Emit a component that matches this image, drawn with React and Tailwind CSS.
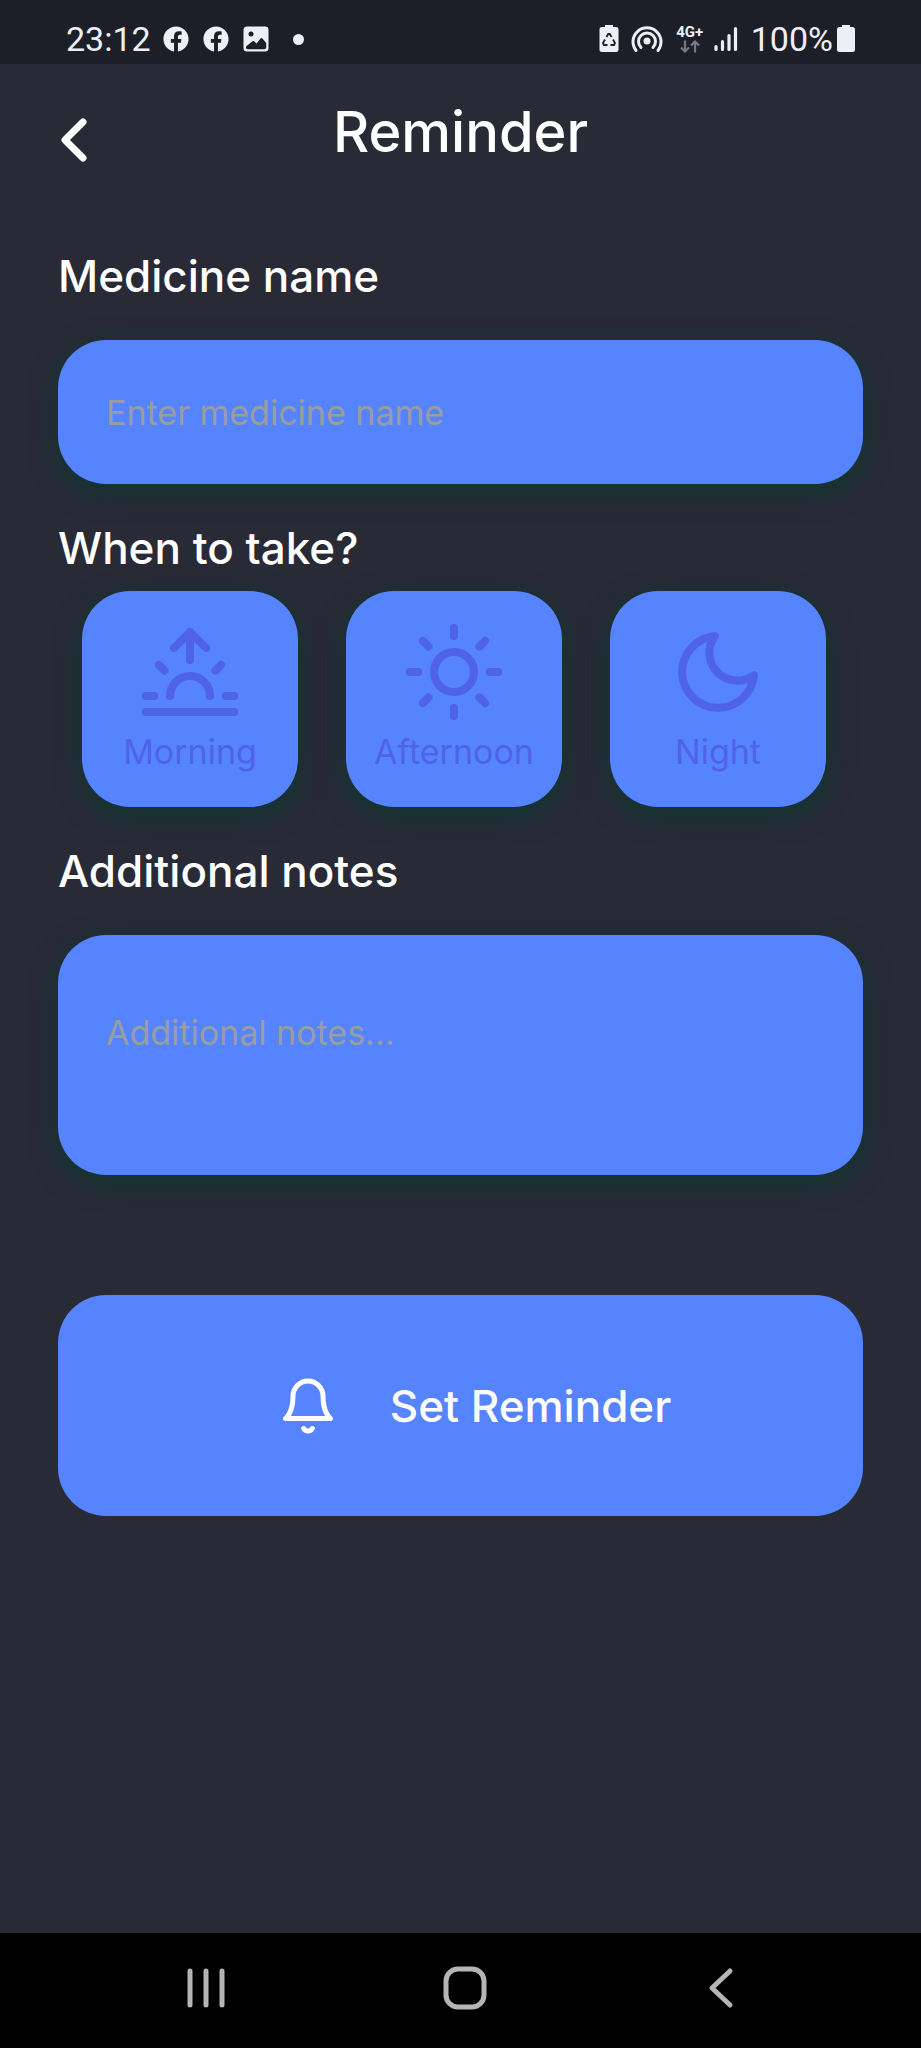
import { FaFacebook } from "react-icons/fa";

const surface = "bg-[#5684ff] rounded-[48px] shadow-[0_8px_22px_5px_rgba(4,62,48,0.5)]";
const labelText = "text-[44px] leading-[56px] font-medium";

function Stroke({ className, children }) {
  return (
    <svg viewBox="0 0 24 24" fill="none" stroke="currentColor" strokeWidth="2" strokeLinecap="round" strokeLinejoin="round" className={className} aria-hidden="true">
      {children}
    </svg>
  );
}

function Sunrise() {
  return (
    <Stroke className="size-24">
      <path d="M17 18a5 5 0 0 0-10 0M12 2v7M4.22 10.22l1.42 1.42M1 18h2M21 18h2M18.36 11.64l1.42-1.42M23 22H1M8 6l4-4 4 4" />
    </Stroke>
  );
}

function Sun() {
  return (
    <Stroke className="size-24">
      <circle cx="12" cy="12" r="5" />
      <path d="M12 1v2M12 21v2M4.22 4.22l1.42 1.42M18.36 18.36l1.42 1.42M1 12h2M21 12h2M4.22 19.78l1.42-1.42M18.36 5.64l1.42-1.42" />
    </Stroke>
  );
}

function Moon() {
  return (
    <Stroke className="size-24">
      <path d="M21 12.79A9 9 0 1 1 11.21 3 7 7 0 0 0 21 12.79z" />
    </Stroke>
  );
}

function StatusBar() {
  return (
    <div className="flex h-16 items-center justify-between bg-[#1d1f28] px-[66px] pt-3.5 font-[Roboto,sans-serif] text-[34px] leading-10 text-[#eeeef6]">
      <div className="flex items-center">
        <span>23:12</span>
        <FaFacebook className="ml-3 size-[26px]" />
        <FaFacebook className="ml-3.5 size-[26px]" />
        <svg viewBox="0 0 26 26" className="ml-3.5 size-[26px]" aria-hidden="true">
          <path fill="currentColor" fillRule="evenodd" d="M4 .5h18A3.500 3.500 0 0 1 25.500 4v18a3.500 3.500 0 0 1-3.500 3.500H4A3.500 3.500 0 0 1 .5 22V4A3.500 3.500 0 0 1 4 .5zM8 5.500a2.500 2.500 0 1 0 0 5 2.500 2.500 0 0 0 0-5zM3 21.500c0 1 .8 1.700 1.700 1.700h16.600c1 0 1.900-.8 1.900-1.700v-4.500l-3.800-4.600c-.6-.7-1.300-.7-1.900 0L13.500 17.500l-2-2c-.8-.8-1.500-.8-2.300 0L3 20.500z" />
        </svg>
        <span className="ml-6 size-[11px] rounded-full bg-current" />
      </div>
      <div className="flex items-center">
        <svg viewBox="0 0 20 28" className="h-7 w-5" aria-hidden="true">
          <path fill="currentColor" d="M6 0h8v2h3a2.500 2.500 0 0 1 2.500 2.500v20A2.500 2.500 0 0 1 17 27H3A2.500 2.500 0 0 1 .5 24.500v-20A2.500 2.500 0 0 1 3 2h3z" />
          <path fill="none" stroke="#1d1f28" strokeWidth="1.800" d="M7.500 12l1.700-3h1.600l1.800 3M14 14.500l2 3.500-1 2h-3.500M8.500 20H5l-1-2 2-3.500" />
        </svg>
        <svg viewBox="0 0 32 28" className="ml-3 h-7 w-8" fill="none" stroke="currentColor" strokeWidth="3" strokeLinecap="round" aria-hidden="true">
          <circle cx="16" cy="16" r="3.500" fill="currentColor" stroke="none" />
          <path d="M5 25.500a14 14 0 1 1 22 0M10 22.500a8.500 8.500 0 1 1 12 0" />
        </svg>
        <div className="ml-3 flex w-[30px] flex-col items-center">
          <span className="text-[15px] leading-[15px] font-bold">4G+</span>
          <svg viewBox="0 0 20 13" className="h-[13px] w-5 text-[#777883]" fill="none" stroke="currentColor" strokeWidth="2.200" aria-hidden="true">
            <path d="M5 .5v11M1 7.500l4 4 4-4M15 12.500v-11M11 5.500l4-4 4 4" />
          </svg>
        </div>
        <svg viewBox="0 0 26 26" className="ml-2 size-[26px]" fill="none" stroke="currentColor" strokeWidth="3.200" strokeLinecap="round" aria-hidden="true">
          <path d="M3 23.500v-3M9.500 23.500v-8M16 23.500v-14M22.500 23.500v-21" />
        </svg>
        <span className="ml-3">100%</span>
        <svg viewBox="0 0 18 28" className="ml-1 h-7 w-[18px]" aria-hidden="true">
          <path fill="currentColor" d="M5 0h8v2h2.500A2.500 2.500 0 0 1 18 4.500v20a2.500 2.500 0 0 1-2.500 2.500h-13A2.500 2.500 0 0 1 0 24.500v-20A2.500 2.500 0 0 1 2.500 2H5z" />
        </svg>
      </div>
    </div>
  );
}

const times = [
  { name: "Morning", Icon: Sunrise },
  { name: "Afternoon", Icon: Sun },
  { name: "Night", Icon: Moon },
];

export default function App() {
  return (
    <div className="flex min-h-screen flex-col bg-[#282a36] font-[Inter,sans-serif] text-white">
      <StatusBar />
      <header className="grid grid-cols-[64px_1fr_64px] items-center px-[42px] pt-8">
        <button type="button" aria-label="Back" className="flex h-[72px] items-end justify-center">
          <svg viewBox="0 0 26 44" className="mb-1.5 h-11 w-[26px]" fill="none" stroke="currentColor" strokeWidth="7" strokeLinecap="round" strokeLinejoin="round" aria-hidden="true">
            <path d="M22 4L4 22l18 18" />
          </svg>
        </button>
        <h1 className="text-center text-[56px] leading-[72px] font-medium">Reminder</h1>
      </header>
      <main className="flex grow flex-col px-[58px] pt-20">
        <label htmlFor="medicine" className={labelText}>Medicine name</label>
        <input id="medicine" type="text" placeholder="Enter medicine name" className={`mt-9 h-36 w-full px-12 text-[34px] placeholder:text-[#9a9ca4] ${surface}`} />
        <fieldset className="mt-9">
          <legend className={labelText}>When to take?</legend>
          <div className="mt-[15px] flex gap-12 px-6">
            {times.map(({ name, Icon }) => (
              <button key={name} type="button" className={`flex size-[216px] flex-col items-center justify-center gap-2.5 text-[#4f63e8] ${surface}`}>
                <Icon />
                <span className="text-[34px] leading-[44px]">{name}</span>
              </button>
            ))}
          </div>
        </fieldset>
        <label htmlFor="notes" className={`mt-9 ${labelText}`}>Additional notes</label>
        <textarea id="notes" placeholder="Additional notes..." className={`mt-9 block h-60 w-full resize-none px-12 pt-[76px] text-[34px] leading-[44px] placeholder:text-[#9a9ca4] ${surface}`} />
        <button type="button" className="mt-[120px] flex h-[221px] items-center justify-center gap-[52px] rounded-[48px] bg-[#5684ff] pl-7">
          <Stroke className="size-[60px]">
            <path d="M18 8A6 6 0 0 0 6 8c0 7-3 9-3 9h18s-3-2-3-9M13.730 21a2 2 0 0 1-3.460 0" />
          </Stroke>
          <span className={labelText}>Set Reminder</span>
        </button>
      </main>
      <nav className="flex h-[115px] items-center justify-between bg-black pr-[19%] pb-1.5 pl-[20%] text-[#b5b5b5]">
        <button type="button" aria-label="Recent apps">
          <svg viewBox="0 0 44 44" className="size-11" fill="none" stroke="currentColor" strokeWidth="5" strokeLinecap="round" aria-hidden="true">
            <path d="M6 5v34M22 5v34M38 5v34" />
          </svg>
        </button>
        <button type="button" aria-label="Home">
          <svg viewBox="0 0 44 44" className="size-11" fill="none" stroke="currentColor" strokeWidth="5" aria-hidden="true">
            <rect x="3" y="3" width="38" height="38" rx="12" />
          </svg>
        </button>
        <button type="button" aria-label="Back to previous screen">
          <svg viewBox="0 0 44 44" className="size-11" fill="none" stroke="currentColor" strokeWidth="5" strokeLinecap="round" strokeLinejoin="round" aria-hidden="true">
            <path d="M28 5L10 22l18 17" />
          </svg>
        </button>
      </nav>
    </div>
  );
}
